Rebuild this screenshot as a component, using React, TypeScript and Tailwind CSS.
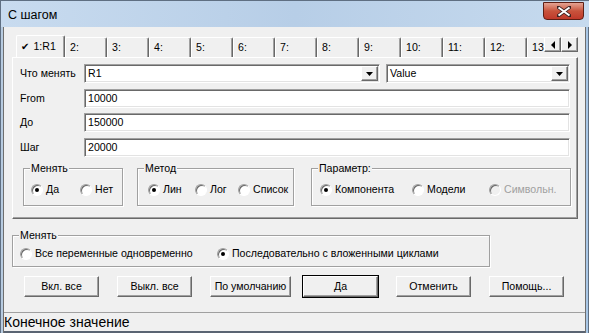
import React from 'react';

const raised =
  'border border-t-white border-l-white border-r-[#696969] border-b-[#696969] shadow-[inset_-1px_-1px_0_#a0a0a0]';
const sunken =
  'border border-t-[#a0a0a0] border-l-[#a0a0a0] border-r-white border-b-white shadow-[inset_1px_1px_0_#696969,inset_-1px_-1px_0_#e3e3e3]';

const Radio: React.FC<{ checked?: boolean; disabled?: boolean }> = ({ checked, disabled }) => (
  <span
    className={`relative inline-block w-[12px] h-[12px] rounded-full border border-t-[#a0a0a0] border-l-[#a0a0a0] border-r-white border-b-white shadow-[inset_1px_1px_0_#696969] shrink-0 ${
      disabled ? 'bg-[#f0f0f0]' : 'bg-white'
    }`}
  >
    {checked && <span className="absolute left-[3px] top-[3px] w-[4px] h-[4px] rounded-full bg-black" />}
  </span>
);

const Opt: React.FC<{ label: string; checked?: boolean; disabled?: boolean; className?: string }> = ({
  label,
  checked,
  disabled,
  className = '',
}) => (
  <div className={`flex items-center gap-[3px] shrink-0 whitespace-nowrap ${className}`}>
    <Radio checked={checked} disabled={disabled} />
    <span className={disabled ? 'text-[#a0a0a0]' : 'text-black'}>{label}</span>
  </div>
);

const Group: React.FC<{ title: string; className?: string; children: React.ReactNode }> = ({
  title,
  className = '',
  children,
}) => (
  <div
    className={`relative border border-[#a0a0a0] shadow-[inset_1px_1px_0_#fff,1px_1px_0_#fff] ${className}`}
  >
    <span className="absolute -top-[8px] left-[6px] bg-[#f0f0f0] px-[1px] leading-[14px]">{title}</span>
    {children}
  </div>
);

const Combo: React.FC<{ value: string; width: string }> = ({ value, width }) => (
  <div className={`${sunken} ${width} h-[19px] bg-white flex items-center justify-between pl-[3px] pr-[1px]`}>
    <span>{value}</span>
    <span className={`${raised} bg-[#f0f0f0] w-[17px] h-[15px] flex items-center justify-center`}>
      <svg width="7" height="4" viewBox="0 0 7 4">
        <path d="M0 0h7L3.5 4z" fill="#000" />
      </svg>
    </span>
  </div>
);

const Field: React.FC<{ label: string; value: string; className?: string }> = ({ label, value, className = '' }) => (
  <div className={`flex items-center h-[19px] ${className}`}>
    <span className="w-[64px]">{label}</span>
    <div className={`${sunken} w-[486px] h-[19px] bg-white flex items-center pl-[3px]`}>{value}</div>
  </div>
);

const Btn: React.FC<{ label: string; width?: string; def?: boolean }> = ({ label, width = 'w-[75px]', def }) => (
  <div className={`${width} h-[21px] ${def ? 'outline outline-1 outline-black' : ''}`}>
    <div className={`${raised} w-full h-full bg-[#f0f0f0] flex items-center justify-center`}>{label}</div>
  </div>
);

export default function App() {
  const tabs = ['2:', '3:', '4:', '5:', '6:', '7:', '8:', '9:', '10:', '11:', '12:', '13:'];
  return (
    <div className="w-[589px] h-[333px] flex flex-col overflow-hidden bg-[#f0f0f0] text-[10.6px] text-black font-['Liberation_Sans',sans-serif]">
      {/* title bar */}
      <div className="h-[27px] flex items-start justify-between bg-gradient-to-r from-[#c8dbef] via-[#b7cee7] to-[#c6daee] border-t border-l border-[#5f6f82]">
        <span className="mt-[5px] ml-[7px] text-[12.5px] text-black">С шагом</span>
        <div className="mt-[1px] mr-[5px] w-[41px] h-[18px] rounded-b-[4px] border border-[#5e1f14] bg-gradient-to-b from-[#e4a393] via-[#c8533c] to-[#c0392a] flex items-center justify-center">
          <svg width="14" height="11" viewBox="0 0 14 11">
            <path d="M1 1l12 9M13 1L1 10" stroke="#3b2222" strokeWidth="3.5" strokeLinecap="square" />
            <path d="M1.5 1.5l11 8M12.5 1.5l-11 8" stroke="#fff" strokeWidth="2" />
          </svg>
        </div>
      </div>

      <div className="flex-1 flex">
        <div className="w-[4px] bg-[#b7cbe0] border-l border-r border-l-[#5f6f82] border-r-[#6e6e6e]" />
        <div className="w-[581px] flex flex-col">
          {/* tab strip */}
          <div className="mt-[8px] pl-[12px] flex items-start h-[22px]">
            <div className="w-[528px] h-[22px] flex items-end overflow-hidden">
              <div className="relative z-10 mb-[-1px] w-[49px] h-[23px] shrink-0 bg-[#f0f0f0] border-t border-l border-t-white border-l-white border-r border-r-[#696969] shadow-[inset_-1px_0_0_#a0a0a0] rounded-t-[2px] flex items-start pt-[4px] pl-[4px]">
                <span className="text-[10px] font-['DejaVu_Sans',sans-serif] leading-[13px]">✔</span>
                <span className="ml-[4px] leading-[13px]">1:R1</span>
              </div>
              {tabs.map((t) => (
                <div
                  key={t}
                  className="w-[42px] h-[20px] shrink-0 border-t border-l border-t-white border-l-white border-r border-r-[#696969] shadow-[inset_-1px_0_0_#a0a0a0] rounded-t-[2px] pl-[4px] pt-[3px] leading-[13px] whitespace-nowrap"
                >
                  {t}
                </div>
              ))}
            </div>
            <div className="mt-[2px] flex">
              {['M5 0v8L1 4z', 'M1 0v8l4-4z'].map((d) => (
                <div key={d} className={`${raised} w-[17px] h-[15px] bg-[#f0f0f0] flex items-center justify-center`}>
                  <svg width="6" height="8" viewBox="0 0 6 8">
                    <path d={d} fill="#000" />
                  </svg>
                </div>
              ))}
            </div>
          </div>

          {/* tab panel */}
          <div className="ml-[8px] w-[566px] h-[162px] border border-t-white border-l-white border-r-[#696969] border-b-[#696969] shadow-[inset_-1px_-1px_0_#a0a0a0] pl-[7px] flex flex-col">
            <div className="mt-[6px] flex items-center h-[19px]">
              <span className="w-[64px]">Что менять</span>
              <Combo value="R1" width="w-[296px]" />
              <div className="ml-[6px]">
                <Combo value="Value" width="w-[184px]" />
              </div>
            </div>
            <Field label="From" value="10000" className="mt-[6px]" />
            <Field label="До" value="150000" className="mt-[5px]" />
            <Field label="Шаг" value="20000" className="mt-[6px]" />
            <div className="mt-[11px] ml-[3px] flex">
              <Group title="Менять" className="w-[100px] h-[38px]">
                <div className="flex items-center mt-[13px] ml-[7px]">
                  <Opt label="Да" checked className="w-[49px]" />
                  <Opt label="Нет" />
                </div>
              </Group>
              <Group title="Метод" className="ml-[14px] w-[157px] h-[38px]">
                <div className="flex items-center mt-[13px] ml-[10px]">
                  <Opt label="Лин" checked className="w-[47px]" />
                  <Opt label="Лог" className="w-[43px]" />
                  <Opt label="Список" />
                </div>
              </Group>
              <Group title="Параметр:" className="ml-[17px] w-[260px] h-[38px]">
                <div className="flex items-center mt-[13px] ml-[8px]">
                  <Opt label="Компонента" checked className="w-[92px]" />
                  <Opt label="Модели" className="w-[77px]" />
                  <Opt label="Символьн." disabled />
                </div>
              </Group>
            </div>
          </div>

          {/* change mode */}
          <Group title="Менять" className="mt-[16px] ml-[8px] w-[478px] h-[32px]">
            <div className="flex items-center mt-[10px] ml-[7px]">
              <Opt label="Все переменные одновременно" className="w-[197px]" />
              <Opt label="Последовательно с вложенными циклами" checked />
            </div>
          </Group>

          {/* buttons */}
          <div className="mt-[9px] ml-[20px] grid grid-cols-[repeat(6,93px)]">
            <Btn label="Вкл. все" />
            <Btn label="Выкл. все" />
            <Btn label="По умолчанию" width="w-[81px]" />
            <Btn label="Да" def />
            <Btn label="Отменить" />
            <Btn label="Помощь..." />
          </div>

          {/* status bar */}
          <div className="mt-[15px] flex-1 border-t border-[#a0a0a0] border-b-2 border-b-[#5a6472] text-[14px] leading-[18px]">
            Конечное значение
          </div>
        </div>
        <div className="w-[4px] bg-[#a9c7e6] border-l border-r border-l-[#6e6e6e] border-r-[#5f6f82]" />
      </div>
    </div>
  );
}
